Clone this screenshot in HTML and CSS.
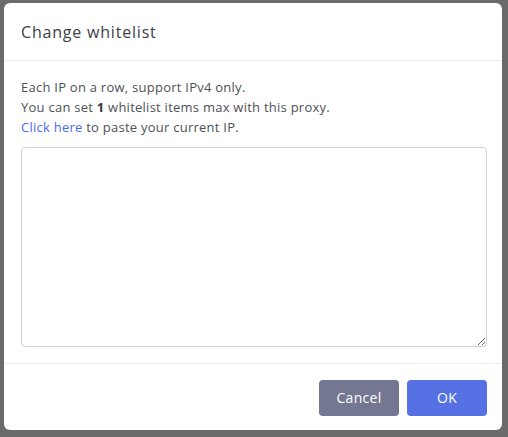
FILE: index.html
```html
<!DOCTYPE html>
<html>
<head>
<meta charset="utf-8">
<link rel="stylesheet" href="styles.css">
</head>
<body>
<div class="modal">
  <div class="modal-header">Change whitelist</div>
  <div class="modal-body">
    <p class="info">Each IP on a row, support IPv4 only.<br>You can set <b>1</b> whitelist items max with this proxy.<br><a class="link" href="#">Click here</a> to paste your current IP.</p>
    <textarea class="ips"></textarea>
  </div>
  <div class="modal-footer">
    <button class="btn btn-cancel">Cancel</button>
    <button class="btn btn-ok">OK</button>
  </div>
</div>
</body>
</html>
```
FILE: styles.css
```css
html, body {
  margin: 0;
  padding: 0;
  background: #6b6b6b;
  height: 437px;
  overflow: hidden;
}
body {
  padding: 3px 6px 7px 4px;
  box-sizing: border-box;
  font-family: "Open Sans", "Noto Sans", sans-serif;
}
.modal {
  background: #fff;
  border-radius: 6px;
  height: 427px;
  display: flex;
  flex-direction: column;
}
.modal-header {
  height: 58px;
  box-sizing: border-box;
  border-bottom: 1px solid #eceef1;
  padding: 0 17px;
  display: flex;
  align-items: center;
  font-size: 16px;
  font-weight: 500;
  color: #3d4047;
  letter-spacing: 0.8px;
}
.modal-body {
  padding: 16px 15px 16px 17px;
  border-bottom: 1px solid #eceef1;
}
.info {
  margin: 0 0 10px;
  font-size: 13px;
  line-height: 20px;
  color: #4d5159;
  letter-spacing: 0.25px;
}
.info b { font-weight: 700; color: #33363c; }
.link { color: #4a6cf0; text-decoration: none; }
.ips {
  display: block;
  width: 100%;
  height: 200px;
  box-sizing: border-box;
  border: 1px solid #cfd3d9;
  border-radius: 4px;
  resize: vertical;
  margin: 0;
}
.modal-footer {
  flex: 1;
  display: flex;
  justify-content: flex-end;
  align-items: center;
  gap: 8px;
  padding: 0 15px 0 17px;
}
.btn {
  width: 80px;
  height: 36px;
  border: none;
  border-radius: 4px;
  color: #fff;
  font-family: "Open Sans", "Noto Sans", sans-serif;
  font-size: 14px;
  font-weight: 500;
  letter-spacing: 0.3px;
  margin-top: 1px;
}
.btn-cancel { background: #737791; }
.btn-ok { background: #5571e3; }
```
